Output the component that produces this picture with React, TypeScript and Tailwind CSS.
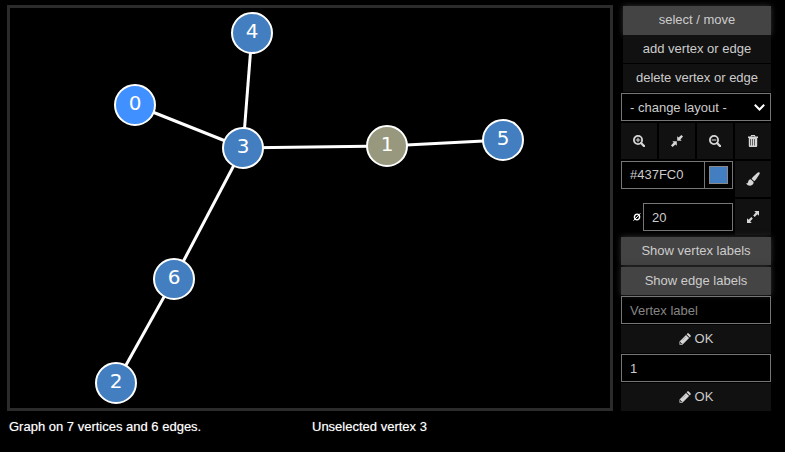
import type { ReactNode } from 'react';

type Vertex = { id: number; x: number; y: number; fill: string };

const vertices: Vertex[] = [
  { id: 0, x: 135, y: 105, fill: '#4090ff' },
  { id: 1, x: 387, y: 146, fill: '#98987f' },
  { id: 2, x: 116, y: 383, fill: '#437fc0' },
  { id: 3, x: 243, y: 148, fill: '#437fc0' },
  { id: 4, x: 252, y: 33, fill: '#437fc0' },
  { id: 5, x: 503, y: 140, fill: '#437fc0' },
  { id: 6, x: 174, y: 279, fill: '#437fc0' },
];

const edges = [[0, 3], [4, 3], [3, 1], [1, 5], [3, 6], [6, 2]];

function Graph() {
  return (
    <svg className="block" width="600" height="400" viewBox="10 8 600 400">
      {edges.map(([a, b]) => (
        <line key={`${a}-${b}`} x1={vertices[a].x} y1={vertices[a].y} x2={vertices[b].x} y2={vertices[b].y} stroke="#fff" strokeWidth="3" />
      ))}
      {vertices.map((v) => (
        <g key={v.id}>
          <circle cx={v.x} cy={v.y} r="20" fill={v.fill} stroke="#fff" strokeWidth="2" />
          <text x={v.x} y={v.y + 5} textAnchor="middle" fill="#fff" fontSize="20" fontFamily="DejaVu Sans, sans-serif">{v.id}</text>
        </g>
      ))}
    </svg>
  );
}

function Icon({ children, size = 12 }: { children: ReactNode; size?: number }) {
  return <svg width={size} height={size} viewBox="0 0 12 12" fill="#d6d6d6">{children}</svg>;
}

function Magnifier({ plus = false }: { plus?: boolean }) {
  return (
    <Icon>
      <circle cx="5" cy="5" r="4.1" fill="none" stroke="#d6d6d6" strokeWidth="1.8" />
      <path d="M8 8l3.1 3.1" stroke="#d6d6d6" strokeWidth="2.2" strokeLinecap="round" />
      <path d={plus ? 'M2.7 5h4.6M5 2.7v4.6' : 'M2.7 5h4.6'} stroke="#d6d6d6" strokeWidth="1.1" />
    </Icon>
  );
}

function Compress() {
  return <Icon><path d="M6.2 1.3l1.4 1.3L10.4 0 12 1.6 9.4 4.4l1.3 1.4H6.2zM1.3 6.2h4.5v4.5L4.4 9.4 1.6 12 0 10.4l2.6-2.8z" /></Icon>;
}

function Expand() {
  return <Icon><path d="M7.2 0H12v4.8l-1.6-1.6-2.7 2.7-1.5-1.5 2.6-2.8zM0 7.2l1.6 1.6 2.7-2.7 1.5 1.5-2.6 2.8L4.8 12H0z" /></Icon>;
}

function Trash() {
  return (
    <Icon>
      <path fillRule="evenodd" d="M4.1 0h3.8l.6 1.5H11v1.6h-.8v7.6c0 .8-.5 1.3-1.2 1.3H3c-.7 0-1.2-.5-1.2-1.3V3.1H1V1.5h2.5zm.5 1l-.2.5h3.2L7.4 1z" />
      <path d="M3.5 4v6.5M5.5 4v6.5M7.5 4v6.5" stroke="#444" strokeWidth=".8" />
    </Icon>
  );
}

function Brush() {
  return <Icon size={14}><path d="M11.4.3c.5.4.5 1.1.1 1.7L8.7 6.3 7.1 7.9 4.8 5.8l1.1-1.5L9.8.6c.5-.5 1.1-.6 1.6-.3zM4.1 6.3l2.4 2.3c.1 1.8-1 3.1-3 3.1-1.7 0-2.8-.7-3.4-2.1.7.3 1.3.2 1.6-.9.4-1.5 1.1-2.3 2.4-2.4z" /></Icon>;
}

function Pencil() {
  return (
    <Icon>
      <path d="M8.3.5c.4-.4 1-.4 1.4 0l1.8 1.8c.4.4.4 1 0 1.4l-.7.7-3.2-3.2zM7 1.9L10.1 5 3.4 11.7H.5V8.5z" />
      <path d="M1.5 8.9v1.7h1.7" fill="none" stroke="#333" strokeWidth=".9" />
      <path d="M3.4 7.4l3.5-3.5" stroke="#888" strokeWidth=".6" />
    </Icon>
  );
}

function Button({ children, active = false, className = '' }: { children: ReactNode; active?: boolean; className?: string }) {
  return (
    <button className={`flex shrink-0 items-center justify-center whitespace-nowrap ${active ? 'bg-[#444] shadow-[0_0_6px_#333]' : 'bg-[#111]'} ${className}`}>
      {children}
    </button>
  );
}

function Tool({ children }: { children: ReactNode }) {
  return <button className="flex size-9 shrink-0 items-center justify-center bg-[#111]">{children}</button>;
}

export default function App() {
  return (
    <div className="flex h-[452px] w-[785px] overflow-hidden bg-black pt-[5px] pl-[7px] font-['Liberation_Sans',Arial,sans-serif] text-[13px] text-[#ccc]">
      <div className="w-[606px] shrink-0">
        <div className="h-[406px] border-3 border-[#2b2b2b]"><Graph /></div>
        <div className="flex pt-2 pl-0.5 leading-4 text-white [text-shadow:0_0_1px_#777]">
          <div className="w-[303px]">Graph on 7 vertices and 6 edges.</div>
          <div>Unselected vertex 3</div>
        </div>
      </div>
      <div className="ml-2 flex w-[150px] shrink-0 flex-col pt-px">
        <div className="ml-0.5 flex flex-col">
          <Button active className="h-[29px] pb-0.5">select / move</Button>
          <Button className="h-7">add vertex or edge</Button>
          <Button className="mt-px h-7">delete vertex or edge</Button>
        </div>
        <div className="mt-px flex h-7 items-center justify-between border border-[#767676] pt-px pr-[5px] pl-2">
          <span>- change layout -</span>
          <svg width="11" height="7" viewBox="0 0 11 7" fill="none"><path d="M.8 .8L5.5 5.5 10.2 .8" stroke="#fff" strokeWidth="2" /></svg>
        </div>
        <div className="mt-0.5 flex gap-0.5">
          <Tool><Magnifier plus /></Tool>
          <Tool><Compress /></Tool>
          <Tool><Magnifier /></Tool>
          <Tool><Trash /></Tool>
        </div>
        <div className="mt-0.5 flex gap-0.5">
          <div className="flex h-7 w-28 border border-[#767676]">
            <div className="flex w-[83px] items-center border-r border-[#767676] pl-2">#437FC0</div>
            <div className="flex flex-1 items-center justify-center"><div className="h-[18px] w-[19px] border border-[#888] bg-[#437fc0]" /></div>
          </div>
          <Tool><Brush /></Tool>
        </div>
        <div className="mt-0.5 flex gap-0.5">
          <div className="mt-1 flex h-7 w-28 items-center justify-end">
            <svg className="mr-0.5" width="8" height="8" viewBox="0 0 8 8" fill="none" stroke="#fff"><ellipse cx="4" cy="4" rx="2.6" ry="2.9" strokeWidth="1.4" /><path d="M.5 7.7L7.3.4" strokeWidth="1" /></svg>
            <div className="flex h-7 w-[90px] items-center border border-[#767676] pt-0.5 pl-2">20</div>
          </div>
          <Tool><Expand /></Tool>
        </div>
        <Button active className="mt-0.5 h-7">Show vertex labels</Button>
        <Button active className="mt-0.5 h-7">Show edge labels</Button>
        <div className="mt-px flex h-7 items-center border border-[#767676] pt-0.5 pl-2 text-[#858585]">Vertex label</div>
        <Button className="mt-px h-7 gap-1"><Pencil />OK</Button>
        <div className="mt-px flex h-7 items-center border border-[#767676] pt-0.5 pl-2">1</div>
        <Button className="mt-px h-7 gap-1"><Pencil />OK</Button>
      </div>
    </div>
  );
}
